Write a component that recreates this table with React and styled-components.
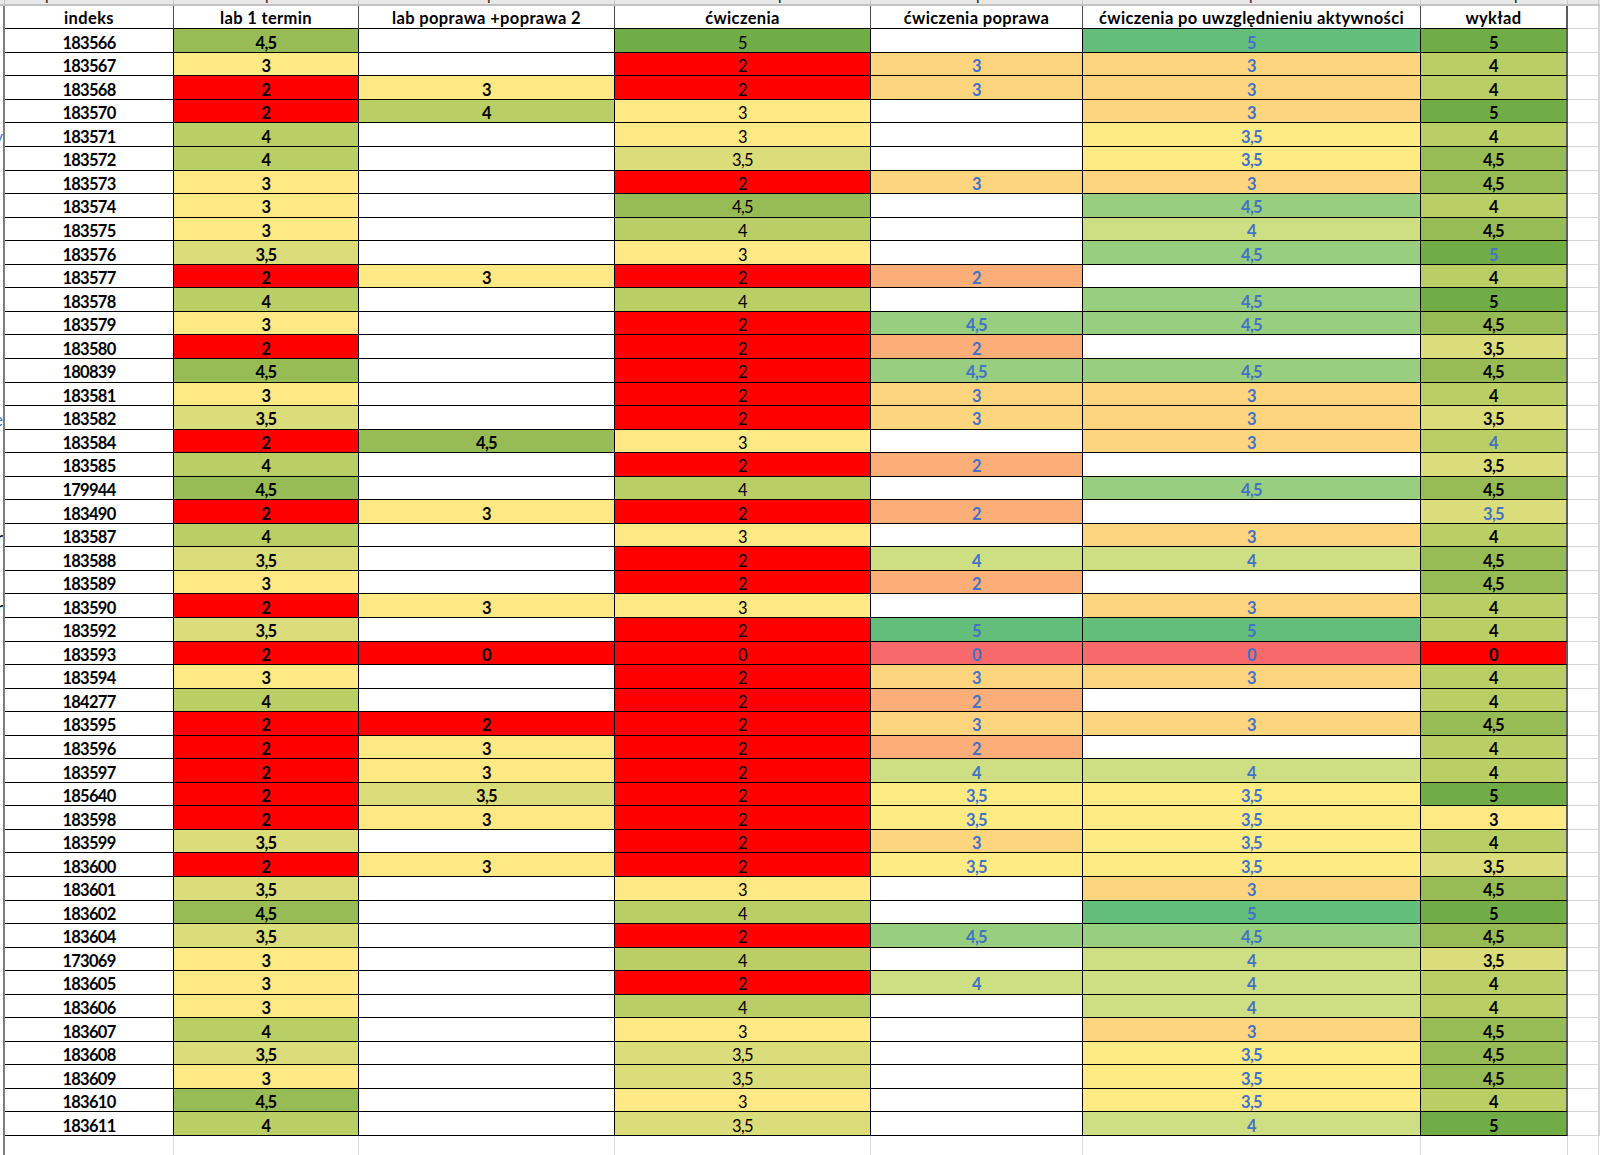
import React from 'react';
import styled, { createGlobalStyle } from 'styled-components';

const GlobalStyle = createGlobalStyle`
  html, body { margin: 0; padding: 0; background: #ffffff; }
  body { font-family: "Lato", "Liberation Sans", sans-serif; }
  #root { width: 1600px; height: 1155px; }
`;

const COLS = '5px 169px 185px 256px 256px 212px 338px 147px 31px 1fr';

const Sheet = styled.div`
  width: 1600px;
  height: 1155px;
  overflow: hidden;
  background: #ffffff;
  display: flex;
  flex-direction: column;
  font-family: "Lato", "Liberation Sans", sans-serif;
  font-size: 16.5px;
`;

const Row = styled.div`
  display: grid;
  grid-template-columns: ${COLS};
  height: ${(p) => p.$h}px;
  flex: none;
`;

const StripRow = styled(Row)`
  background: #e8e8e8;
  border-bottom: 2px solid #c3c3c3;
  box-sizing: border-box;
`;

const FillerRow = styled(Row)`
  flex: 1;
  height: auto;
`;

const StripCell = styled.div`
  border-right: 1px solid #c9c9c9;
  overflow: hidden;
  display: flex;
  padding-left: ${(p) => p.$x || 0}px;
`;

const Descender = styled.span`
  display: block;
  font-size: 15.5px;
  line-height: 15.5px;
  margin-top: -13px;
  color: #222;
`;

const EdgeCell = styled.div`
  border-right: 2px solid #7d7d7d;
  overflow: hidden;
  display: flex;
  justify-content: flex-end;
  align-items: center;
  white-space: nowrap;
  color: ${(p) => p.$color || '#000'};
  font-weight: 400;
  padding-top: 4px;
`;

const Cell = styled.div`
  box-sizing: border-box;
  border-right: ${(p) => (p.$thick ? '2px solid #5c5c5c' : '1px solid #000')};
  border-bottom: 1px solid #000;
  background: ${(p) => p.$bg || '#ffffff'};
  color: ${(p) => p.$color || '#000'};
  font-weight: ${(p) => p.$weight || 700};
  letter-spacing: -0.7px;
  display: flex;
  align-items: center;
  justify-content: center;
  white-space: nowrap;
  overflow: hidden;
  padding-top: 4px;
`;

const HeadCell = styled(Cell)`
  border-right: ${(p) => (p.$thick ? '2px solid #5c5c5c' : '1px solid #4a4a4a')};
  font-weight: 700;
  letter-spacing: 0.35px;
  padding-top: 2px;
`;

const GridCell = styled.div`
  box-sizing: border-box;
  border-right: 1px solid #d4d4d4;
  border-bottom: ${(p) => (p.$noBottom ? 'none' : '1px solid #d4d4d4')};
`;

const BlankCell = styled.div`
  border-right: 1px solid #d9d9d9;
`;

const EdgeBlank = styled.div`
  border-right: 2px solid #7d7d7d;
`;

const BLUE = '#4472C4';

const FIXED = {
  '5': '#70AD47',
  '4,5': '#97BC56',
  '4': '#B9CE65',
  '3,5': '#DADD79',
  '3': '#FFE984',
  '2': '#FF0000',
  '0': '#FF0000',
};

const SCALE = {
  '5': '#63BE7B',
  '4,5': '#98CE7F',
  '4': '#CDDF82',
  '3,5': '#FFEB84',
  '3': '#FDD57F',
  '2': '#FBAE78',
  '0': '#F8696B',
};

// [indeks, lab1, labPoprawa, cwiczenia, cwPoprawa, cwAktywnosc, wyklad, wykladBlue, edge]
const ROWS = [
  ['183566', '4,5', '', '5', '', '5', '5'],
  ['183567', '3', '', '2', '3', '3', '4'],
  ['183568', '2', '3', '2', '3', '3', '4'],
  ['183570', '2', '4', '3', '', '3', '5'],
  ['183571', '4', '', '3', '', '3,5', '4', false, ['y', BLUE]],
  ['183572', '4', '', '3,5', '', '3,5', '4,5'],
  ['183573', '3', '', '2', '3', '3', '4,5'],
  ['183574', '3', '', '4,5', '', '4,5', '4'],
  ['183575', '3', '', '4', '', '4', '4,5'],
  ['183576', '3,5', '', '3', '', '4,5', '5', true],
  ['183577', '2', '3', '2', '2', '', '4'],
  ['183578', '4', '', '4', '', '4,5', '5'],
  ['183579', '3', '', '2', '4,5', '4,5', '4,5'],
  ['183580', '2', '', '2', '2', '', '3,5'],
  ['180839', '4,5', '', '2', '4,5', '4,5', '4,5'],
  ['183581', '3', '', '2', '3', '3', '4'],
  ['183582', '3,5', '', '2', '3', '3', '3,5', false, ['e', BLUE]],
  ['183584', '2', '4,5', '3', '', '3', '4', true],
  ['183585', '4', '', '2', '2', '', '3,5'],
  ['179944', '4,5', '', '4', '', '4,5', '4,5'],
  ['183490', '2', '3', '2', '2', '', '3,5', true],
  ['183587', '4', '', '3', '', '3', '4', false, ['r', '#000']],
  ['183588', '3,5', '', '2', '4', '4', '4,5'],
  ['183589', '3', '', '2', '2', '', '4,5'],
  ['183590', '2', '3', '3', '', '3', '4', false, ['r', '#000']],
  ['183592', '3,5', '', '2', '5', '5', '4'],
  ['183593', '2', '0', '0', '0', '0', '0'],
  ['183594', '3', '', '2', '3', '3', '4'],
  ['184277', '4', '', '2', '2', '', '4'],
  ['183595', '2', '2', '2', '3', '3', '4,5'],
  ['183596', '2', '3', '2', '2', '', '4'],
  ['183597', '2', '3', '2', '4', '4', '4'],
  ['185640', '2', '3,5', '2', '3,5', '3,5', '5'],
  ['183598', '2', '3', '2', '3,5', '3,5', '3'],
  ['183599', '3,5', '', '2', '3', '3,5', '4'],
  ['183600', '2', '3', '2', '3,5', '3,5', '3,5'],
  ['183601', '3,5', '', '3', '', '3', '4,5'],
  ['183602', '4,5', '', '4', '', '5', '5'],
  ['183604', '3,5', '', '2', '4,5', '4,5', '4,5'],
  ['173069', '3', '', '4', '', '4', '3,5'],
  ['183605', '3', '', '2', '4', '4', '4'],
  ['183606', '3', '', '4', '', '4', '4'],
  ['183607', '4', '', '3', '', '3', '4,5'],
  ['183608', '3,5', '', '3,5', '', '3,5', '4,5'],
  ['183609', '3', '', '3,5', '', '3,5', '4,5'],
  ['183610', '4,5', '', '3', '', '3,5', '4'],
  ['183611', '4', '', '3,5', '', '4', '5'],
];

const HEADERS = [
  'indeks',
  'lab 1 termin',
  'lab poprawa +poprawa 2',
  'ćwiczenia',
  'ćwiczenia poprawa',
  'ćwiczenia po uwzględnieniu aktywności',
  'wykład',
];

const STRIP_MARKS = [0, 40, 91, 128, 163, 105, 166, 93, 0];

const fixed = (v) => (v ? FIXED[v] : '#ffffff');
const scale = (v) => (v ? SCALE[v] : '#ffffff');

function DataRow({ r }) {
  const [idx, lab1, labp, cw, cwp, cwa, wyk, wykBlue, edge] = r;
  return (
    <Row $h={23.55}>
      <EdgeCell $color={edge ? edge[1] : '#000'}>{edge ? edge[0] : ''}</EdgeCell>
      <Cell>{idx}</Cell>
      <Cell $bg={fixed(lab1)}>{lab1}</Cell>
      <Cell $bg={fixed(labp)}>{labp}</Cell>
      <Cell $bg={fixed(cw)} $weight={400}>{cw}</Cell>
      <Cell $bg={scale(cwp)} $color={BLUE}>{cwp}</Cell>
      <Cell $bg={scale(cwa)} $color={BLUE}>{cwa}</Cell>
      <Cell $bg={fixed(wyk)} $color={wykBlue ? BLUE : '#000'} $thick>{wyk}</Cell>
      <GridCell />
      <GridCell $noBottom />
    </Row>
  );
}

export default function App() {
  return (
    <>
      <GlobalStyle />
      <Sheet>
        <StripRow $h={6}>
          {STRIP_MARKS.map((x, i) => (
            <StripCell key={i} $x={x}>
              {i > 0 && i < 8 ? <Descender>p</Descender> : null}
            </StripCell>
          ))}
          <div />
        </StripRow>
        <Row $h={23.3}>
          <EdgeCell />
          {HEADERS.map((h, i) => (
            <HeadCell key={h} $thick={i === 6}>
              {h}
            </HeadCell>
          ))}
          <GridCell />
          <GridCell $noBottom />
        </Row>
        {ROWS.map((r) => (
          <DataRow key={r[0]} r={r} />
        ))}
        <FillerRow>
          <EdgeBlank />
          <BlankCell />
          <BlankCell />
          <BlankCell />
          <BlankCell />
          <BlankCell />
          <BlankCell />
          <BlankCell />
          <BlankCell />
          <div />
        </FillerRow>
      </Sheet>
    </>
  );
}
